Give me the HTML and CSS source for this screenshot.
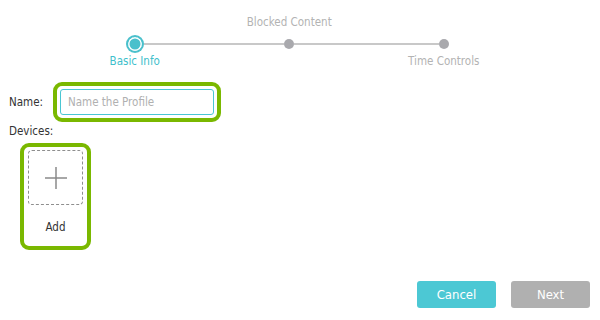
FILE: index.html
```html
<!DOCTYPE html>
<html>
<head>
<meta charset="utf-8">
<link rel="stylesheet" href="styles.css">
</head>
<body>
<div class="page">
  <div class="stepper">
    <div class="step step-first active">
      <div class="step-top"></div>
      <div class="track"><span class="line"></span><span class="dot"></span><span class="line"></span></div>
      <div class="step-bottom">Basic Info</div>
    </div>
    <div class="step">
      <div class="step-top">Blocked Content</div>
      <div class="track"><span class="line"></span><span class="dot"></span><span class="line"></span></div>
      <div class="step-bottom"></div>
    </div>
    <div class="step step-last">
      <div class="step-top"></div>
      <div class="track"><span class="line"></span><span class="dot"></span><span class="line"></span></div>
      <div class="step-bottom">Time Controls</div>
    </div>
  </div>

  <div class="name-row">
    <label class="label name-label">Name:</label>
    <div class="highlight name-highlight">
      <input class="name-input" type="text" placeholder="Name the Profile">
    </div>
  </div>

  <div class="label devices-label">Devices:</div>
  <div class="highlight device-highlight">
    <div class="add-box">
      <svg width="24" height="24" viewBox="0 0 24 24"><path d="M12 1V23M1 12H23" stroke="#8a8a8a" stroke-width="1.5" fill="none"/></svg>
    </div>
    <div class="add-text">Add</div>
  </div>

  <div class="actions">
    <button class="btn btn-cancel">Cancel</button>
    <button class="btn btn-next">Next</button>
  </div>
</div>
</body>
</html>
```

FILE: styles.css
```css
* { box-sizing: border-box; }
html, body { margin: 0; padding: 0; background: #fff; }
body {
  font-family: "DejaVu Sans Condensed", "DejaVu Sans", sans-serif;
  font-size: 11.5px;
  color: #333;
  width: 600px;
  height: 320px;
  overflow: hidden;
}
.page { padding-top: 15px; }

.stepper {
  display: grid;
  grid-template-columns: 154.5px 154.5px 154.5px;
  margin-left: 57.5px;
}
.step { display: flex; flex-direction: column; align-items: stretch; }
.step-top, .step-bottom {
  height: 14px;
  line-height: 14px;
  text-align: center;
  color: #b3b3b3;
  white-space: nowrap;
}
.track {
  display: flex;
  align-items: center;
  height: 18px;
  margin-top: 6px;
  margin-bottom: 1px;
}
.line { flex: 1; height: 2px; background: #c8c8c8; }
.step-first .line:first-child, .step-last .line:last-child { background: transparent; }
.dot {
  width: 10px; height: 10px; border-radius: 50%;
  background: #a9a9ad;
  flex: none;
}
.active .dot {
  width: 18px; height: 18px;
  background: #4ac0cc;
  border: 2px dotted #4ac0cc;
  box-shadow: inset 0 0 0 1.5px #fff;
}
.active .step-bottom { color: #3fbfcc; }

.name-row {
  display: flex;
  align-items: center;
  margin-top: 14px;
  margin-left: 9px;
}
.label { color: #333; }
.name-label { width: 44px; }
.highlight {
  border: 4px solid #7ab800;
  border-radius: 9px;
  padding: 3px;
}
.name-highlight { width: 168px; height: 40px; }
.name-input {
  display: block;
  width: 154px;
  height: 26px;
  border: 1px solid #4ac6d2;
  border-radius: 3px;
  padding: 0 7px;
  font-family: inherit;
  font-size: 11.5px;
  outline: none;
}
.name-input::placeholder { color: #b0b0b0; }

.devices-label { margin: 2px 0 0 9px; height: 14px; line-height: 14px; }
.device-highlight {
  margin: 5px 0 0 20px;
  width: 71px;
  height: 107px;
  display: flex;
  flex-direction: column;
  align-items: center;
}
.add-box {
  width: 55px; height: 55px;
  border: 1px dashed #8e8e8e;
  border-radius: 4px;
  display: flex; align-items: center; justify-content: center;
}
.add-text { margin-top: 15px; color: #333; line-height: 14px; }

.actions {
  display: flex;
  justify-content: flex-end;
  gap: 15px;
  margin-top: 31px;
  margin-right: 10px;
}
.btn {
  width: 79px; height: 27px;
  border: none;
  border-radius: 3px;
  color: #fff;
  font-family: inherit;
  font-size: 13px;
  padding: 0;
}
.btn-cancel { background: #4cc8d4; }
.btn-next { background: #b0b0b0; }
```
